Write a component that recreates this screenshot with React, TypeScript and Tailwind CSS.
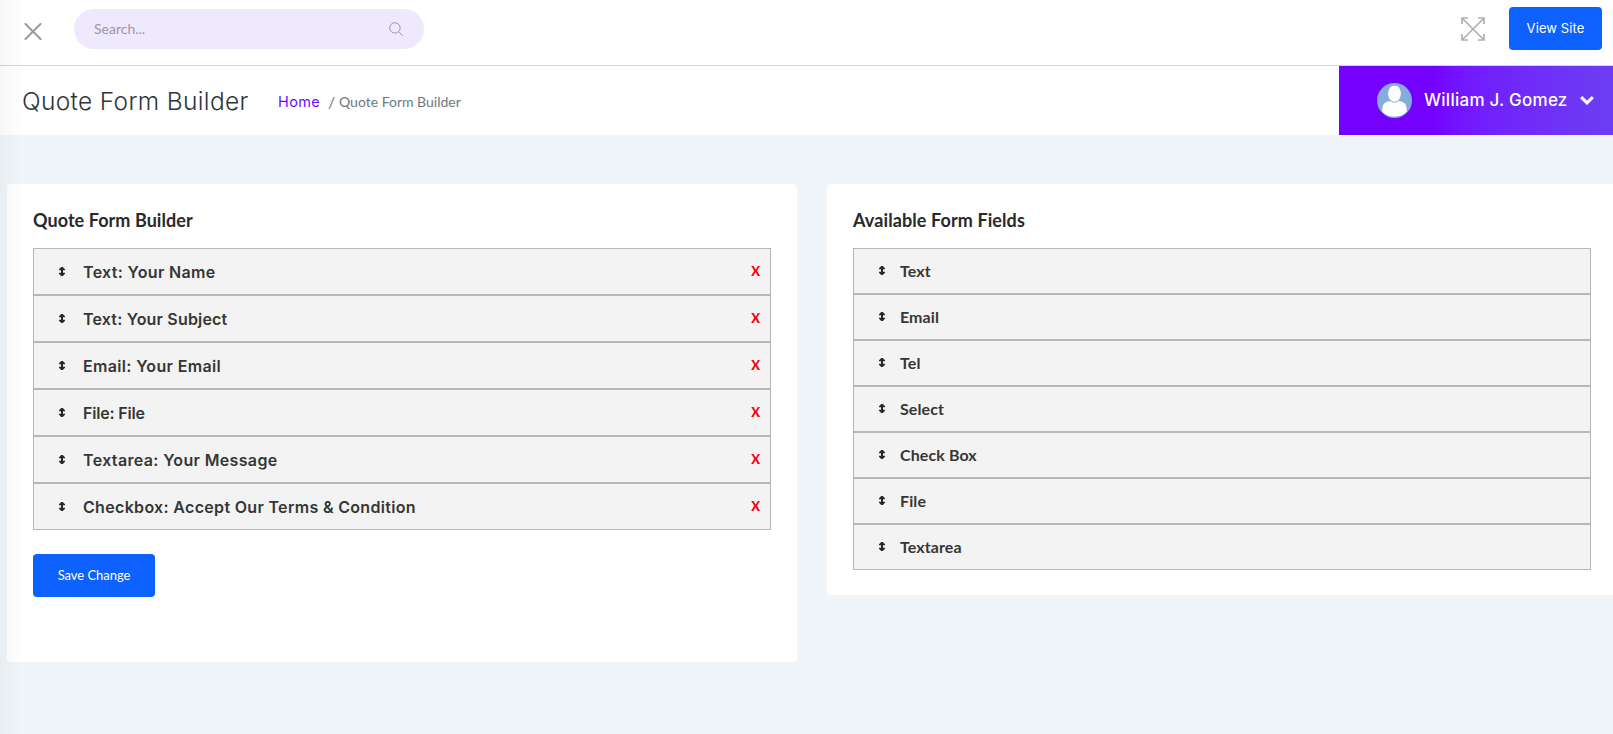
import React from "react";

const formFields = [
  { label: "Text: Your Name", spacing: "tracking-[0.33px]" },
  { label: "Text: Your Subject", spacing: "tracking-[0.18px]" },
  { label: "Email: Your Email", spacing: "tracking-[0.34px]" },
  { label: "File: File", spacing: "tracking-[-0.18px]" },
  { label: "Textarea: Your Message", spacing: "tracking-[0.35px]" },
  { label: "Checkbox: Accept Our Terms & Condition", spacing: "tracking-[0.32px]" },
];

const availableFields = ["Text", "Email", "Tel", "Select", "Check Box", "File", "Textarea"];

function DragIcon() {
  return (
    <svg width="6" height="9" viewBox="0 0 6 9" className="mb-px shrink-0" fill="#292929">
      <path d="M2.200 0h1.600L6 2.200V3.200H4v2.600h2v1L3.800 9H2.200L0 6.800v-1h2V3.200H0v-1Z" />
    </svg>
  );
}

function Header() {
  return (
    <header className="flex h-[66px] items-start border-b border-[#cbd5de] bg-white">
      <button className="ml-6 mt-[23px]" aria-label="Close menu">
        <svg width="18" height="17" viewBox="0 0 18 17" stroke="#a0989c" strokeWidth="2.100" strokeLinecap="round">
          <path d="M1.500 1 16.500 16M16.500 1 1.500 16" />
        </svg>
      </button>
      <div className="ml-8 mt-[9px] flex h-10 w-[350px] items-center justify-between rounded-full bg-[#efe9fe] pl-5 pr-[21px]">
        <span className="text-sm text-[#a1969f]">Search...</span>
        <svg width="14" height="14" viewBox="0 0 14 14" fill="none" stroke="#a1969f" strokeWidth="1">
          <circle cx="5.900" cy="5.900" r="5.200" />
          <path d="m9.700 9.700 4 4" />
        </svg>
      </div>
      <div className="ml-auto mr-[11px] flex">
        <svg className="mr-6 mt-[17px]" width="24" height="24" viewBox="0 0 24 24" fill="none" stroke="#b0b0b0" strokeWidth="1.700">
          <path d="M1 1 23 23M23 1 1 23M1 7V1h6M17 1h6v6M23 17v6h-6M7 23H1v-6" />
        </svg>
        <button className="mt-[7px] h-[43px] w-[93px] rounded-[4px] bg-[#0d61ff] font-['Inter',sans-serif] text-[13px] tracking-[0.1px] text-white">
          View Site
        </button>
      </div>
    </header>
  );
}

function TitleBar() {
  return (
    <div className="flex h-[69px] items-center bg-white">
      <h1 className="ml-[22px] w-[256px] whitespace-nowrap pt-px font-['Inter',sans-serif] text-[24.500px] font-light tracking-[0.34px] text-[#2d3538]">
        Quote Form Builder
      </h1>
      <nav className="flex items-center pt-[3px] text-sm text-[#6c7a7e]">
        <a className="w-[50px] font-['Inter',sans-serif] text-[14.500px] tracking-[0.35px] text-[#6a0cff]">Home</a>
        <span className="w-[11px] text-base leading-5">/</span>
        <span>Quote Form Builder</span>
      </nav>
      <div className="ml-auto flex h-full w-[274px] items-center bg-linear-to-r from-[#7400ff] from-34% to-[#6c3df2] pl-[38px]">
        <svg width="35" height="35" viewBox="0 0 35 35">
          <circle cx="17.500" cy="17.500" r="17.500" fill="#85acdb" />
          <path d="M5.200 28.500v-1c0-6 2.300-8.500 6.800-9.200h11c4.500.7 6.800 3.200 6.800 9.200v1c-3.200 3.800-7.500 5-12.300 5s-9.100-1.200-12.300-5Z" fill="#fff" />
          <ellipse cx="17.500" cy="10.600" rx="6.900" ry="8.700" fill="#fff" stroke="#85acdb" strokeWidth="1" />
        </svg>
        <span className="ml-3 w-[155px] whitespace-nowrap font-['Inter',sans-serif] text-[17px] font-medium tracking-[0.26px] text-white">
          William J. Gomez
        </span>
        <svg className="ml-px" width="14" height="9" viewBox="0 0 14 9" fill="none" stroke="#fff" strokeWidth="3.200">
          <path d="m1.200 1.200 5.800 5.600 5.800-5.600" />
        </svg>
      </div>
    </div>
  );
}

export default function App() {
  return (
    <div className="relative h-[734px] w-full overflow-hidden bg-[#f0f5fa] font-['Lato',sans-serif]">
      <Header />
      <TitleBar />
      <main className="mt-[49px] flex items-start gap-[30px] pl-[7px]">
        <section className="h-[478px] w-[790px] shrink-0 rounded-[4px] bg-white px-[26px] pt-[22px]">
          <h2 className="mb-[14px] text-lg font-bold tracking-[0.060px] text-[#292929]">Quote Form Builder</h2>
          <ul>
            {formFields.map((f) => (
              <li key={f.label} className="flex h-[47px] items-center border border-[#b7b7b7] bg-[#f3f3f3] pl-[25px] pr-[10px]">
                <DragIcon />
                <span className={`ml-[18px] font-['Inter',sans-serif] text-base font-semibold text-[#363636] ${f.spacing}`}>
                  {f.label}
                </span>
                <button className="ml-auto text-[13px] font-black leading-none text-[#f80012]">X</button>
              </li>
            ))}
          </ul>
          <button className="mt-6 h-[43px] w-[122px] rounded-[4px] bg-[#0d61ff] text-[13px] tracking-[-0.050px] text-white">
            Save Change
          </button>
        </section>
        <section className="h-[411px] w-[790px] shrink-0 rounded-[4px] bg-white px-[26px] pt-[22px]">
          <h2 className="mb-[14px] text-lg font-bold tracking-[0.1px] text-[#292929]">Available Form Fields</h2>
          <ul>
            {availableFields.map((label) => (
              <li key={label} className="flex h-[46px] items-center border border-[#b7b7b7] bg-[#f3f3f3] pl-[25px]">
                <DragIcon />
                <span className="ml-[15px] text-base font-bold tracking-[0.1px] text-[#363636]">{label}</span>
              </li>
            ))}
          </ul>
        </section>
      </main>
      <div className="pointer-events-none absolute inset-y-0 left-0 w-6 bg-linear-to-r from-black/[0.03] to-transparent" />
    </div>
  );
}
